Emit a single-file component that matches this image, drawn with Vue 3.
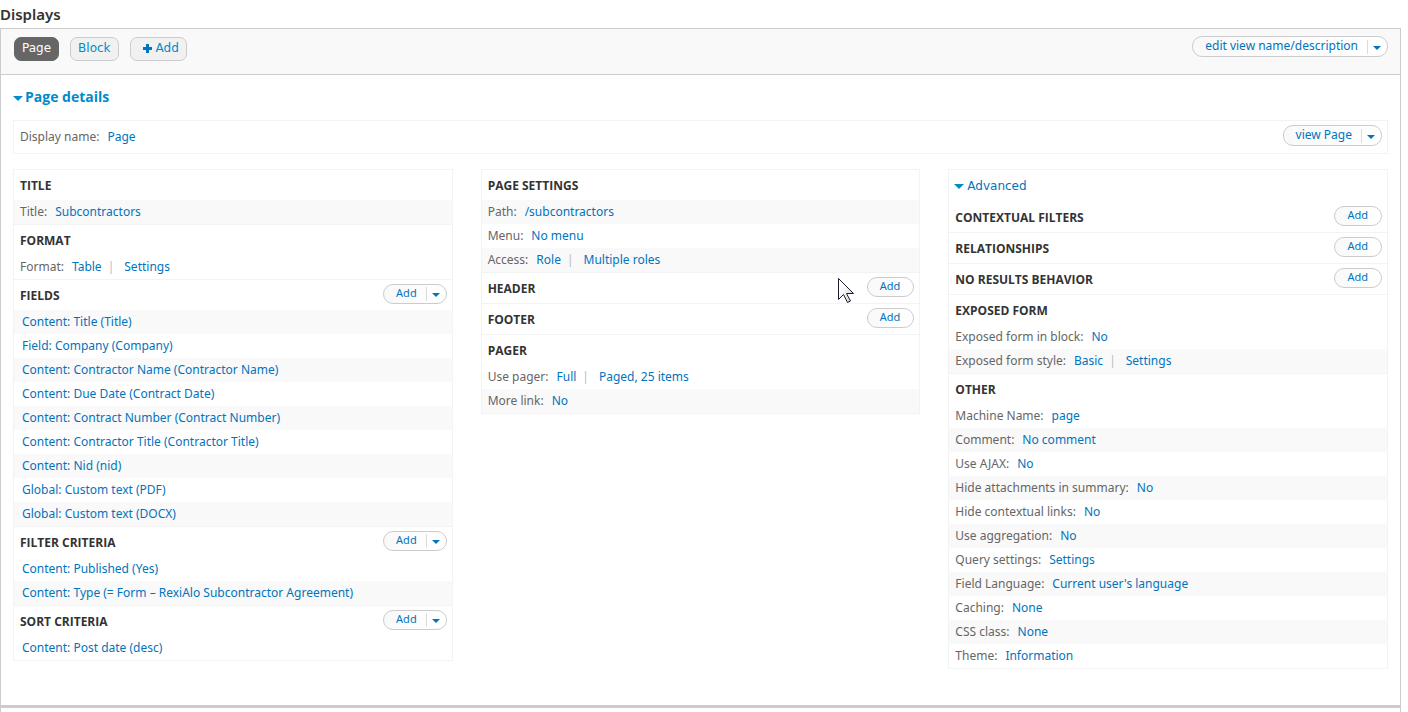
<script setup>
const columns = [
  {
    sections: [
      { title: 'Title', rows: [{ label: 'Title:', links: ['Subcontractors'], shaded: true }] },
      { title: 'Format', rows: [{ label: 'Format:', links: ['Table', 'Settings'] }] },
      {
        title: 'Fields',
        action: 'split',
        rows: [
          { links: ['Content: Title (Title)'], shaded: true },
          { links: ['Field: Company (Company)'] },
          { links: ['Content: Contractor Name (Contractor Name)'], shaded: true },
          { links: ['Content: Due Date (Contract Date)'] },
          { links: ['Content: Contract Number (Contract Number)'], shaded: true },
          { links: ['Content: Contractor Title (Contractor Title)'] },
          { links: ['Content: Nid (nid)'], shaded: true },
          { links: ['Global: Custom text (PDF)'] },
          { links: ['Global: Custom text (DOCX)'], shaded: true },
        ],
      },
      {
        title: 'Filter criteria',
        action: 'split',
        rows: [
          { links: ['Content: Published (Yes)'] },
          { links: ['Content: Type (= Form – RexiAlo Subcontractor Agreement)'], shaded: true },
        ],
      },
      { title: 'Sort criteria', action: 'split', rows: [{ links: ['Content: Post date (desc)'] }] },
    ],
  },
  {
    sections: [
      {
        title: 'Page settings',
        rows: [
          { label: 'Path:', links: ['/subcontractors'], shaded: true },
          { label: 'Menu:', links: ['No menu'] },
          { label: 'Access:', links: ['Role', 'Multiple roles'], shaded: true },
        ],
      },
      { title: 'Header', action: 'single', rows: [] },
      { title: 'Footer', action: 'single', rows: [] },
      {
        title: 'Pager',
        rows: [
          { label: 'Use pager:', links: ['Full', 'Paged, 25 items'] },
          { label: 'More link:', links: ['No'], shaded: true },
        ],
      },
    ],
  },
  {
    toggle: 'Advanced',
    sections: [
      { title: 'Contextual filters', action: 'single', rows: [] },
      { title: 'Relationships', action: 'single', rows: [] },
      { title: 'No results behavior', action: 'single', rows: [] },
      {
        title: 'Exposed form',
        rows: [
          { label: 'Exposed form in block:', links: ['No'] },
          { label: 'Exposed form style:', links: ['Basic', 'Settings'], shaded: true },
        ],
      },
      {
        title: 'Other',
        rows: [
          { label: 'Machine Name:', links: ['page'] },
          { label: 'Comment:', links: ['No comment'], shaded: true },
          { label: 'Use AJAX:', links: ['No'] },
          { label: 'Hide attachments in summary:', links: ['No'], shaded: true },
          { label: 'Hide contextual links:', links: ['No'] },
          { label: 'Use aggregation:', links: ['No'], shaded: true },
          { label: 'Query settings:', links: ['Settings'] },
          { label: 'Field Language:', links: ["Current user's language"], shaded: true },
          { label: 'Caching:', links: ['None'] },
          { label: 'CSS class:', links: ['None'], shaded: true },
          { label: 'Theme:', links: ['Information'] },
        ],
      },
    ],
  },
]
</script>

<template>
  <main class="page">
    <h1 class="page-title">Displays</h1>
    <div class="displays">
      <div class="top-bar">
        <nav class="tabs">
          <button type="button" class="tab active">Page</button>
          <button type="button" class="tab">Block</button>
          <button type="button" class="tab add">
            <svg class="plus" width="9" height="9" viewBox="0 0 9 9" aria-hidden="true">
              <path d="M3 0h3v3h3v3H6v3H3V6H0V3h3z" fill="#0074bd" />
            </svg>
            Add
          </button>
        </nav>
        <div class="drop large">
          <button type="button" class="drop-main">edit view name/description</button>
          <button type="button" class="drop-toggle" aria-label="List additional actions"><i class="arrow"></i></button>
        </div>
      </div>

      <div class="content">
        <h2 class="details-title">
          <button type="button" class="details-toggle"><i class="arrow wide"></i>Page details</button>
        </h2>

        <div class="name-box">
          <span class="label">Display name:</span>
          <a href="#">Page</a>
          <div class="drop large">
            <button type="button" class="drop-main">view Page</button>
            <button type="button" class="drop-toggle" aria-label="List additional actions"><i class="arrow"></i></button>
          </div>
        </div>

        <div class="columns">
          <div v-for="(column, c) in columns" :key="c" class="column">
            <button v-if="column.toggle" type="button" class="advanced">
              <i class="arrow wide"></i>{{ column.toggle }}
            </button>
            <section v-for="section in column.sections" :key="section.title" class="bucket">
              <header class="bucket-head">
                <h3>{{ section.title }}</h3>
                <div v-if="section.action === 'split'" class="drop">
                  <button type="button" class="drop-main">Add</button>
                  <button type="button" class="drop-toggle" aria-label="List additional actions"><i class="arrow"></i></button>
                </div>
                <div v-else-if="section.action" class="drop">
                  <button type="button" class="drop-main single">Add</button>
                </div>
              </header>
              <div
                v-for="(row, r) in section.rows"
                :key="r"
                class="row"
                :class="{ shaded: row.shaded, item: !row.label }"
              >
                <span v-if="row.label" class="label">{{ row.label }}</span>
                <template v-for="(link, l) in row.links" :key="l">
                  <span v-if="l" class="bar">|</span>
                  <a href="#">{{ link }}</a>
                </template>
              </div>
            </section>
          </div>
        </div>
      </div>
    </div>
    <div class="next-panel"></div>

    <svg class="pointer" width="17" height="26" viewBox="0 0 17 26" aria-hidden="true">
      <defs>
        <linearGradient id="pointer-fill" x1="0" y1="0" x2="1" y2="1">
          <stop offset="0.3" stop-color="#fff" />
          <stop offset="1" stop-color="#ccc" />
        </linearGradient>
      </defs>
      <path
        d="M.5.5v21l5-5 4 8 3-1.500-4-7.500h7z"
        fill="url(#pointer-fill)"
        stroke="#1c1c30"
        stroke-linejoin="round"
      />
    </svg>
  </main>
</template>

<style>
body {
  margin: 0;
  background: #fff;
}
</style>

<style scoped>
.page {
  position: relative;
  box-sizing: border-box;
  min-height: 100vh;
  display: flex;
  flex-direction: column;
  padding-right: 7px;
  font-family: "Noto Sans", "Open Sans", sans-serif;
  font-size: 12px;
  color: #666;
}

button {
  font: inherit;
  margin: 0;
  padding: 0;
  border: 0;
  background: none;
  color: #0074bd;
  cursor: pointer;
}

a {
  color: #0074bd;
  text-decoration: none;
}

.page-title {
  margin: 0;
  height: 28px;
  flex: none;
  font-size: 15px;
  font-weight: 600;
  line-height: 29px;
  color: #333;
}

.displays {
  flex: 1;
  border: 1px solid #ccc;
  border-bottom-width: 3px;
}

.top-bar {
  display: flex;
  justify-content: space-between;
  align-items: flex-start;
  padding: 7px 12px 12px 13px;
  height: 26px;
  border-bottom: 1px solid #ccc;
  background: #f9f9f9;
}

.tabs {
  display: flex;
  gap: 11px;
  padding-top: 1px;
}

.tab {
  display: flex;
  align-items: center;
  gap: 4px;
  height: 24px;
  padding: 0 7px 2px;
  border: 1px solid #ccc;
  border-radius: 7px;
  background: #f1f1f1;
  font-family: "DejaVu Sans", sans-serif;
  font-size: 12px;
  line-height: 20px;
  color: #008bcb;
}

.tab.active {
  border-color: #666;
  background: #666;
  color: #fff;
}

.tab.add {
  padding-left: 12px;
}

.arrow {
  display: block;
  flex: none;
  border: 4px solid transparent;
  border-top-color: #0074bd;
  border-bottom: 0;
}

.arrow.wide {
  border-width: 5px 5px 0;
  border-top-color: #008bcb;
}

.drop {
  display: flex;
  align-items: center;
  box-sizing: border-box;
  height: 20px;
  border: 1px solid #ccc;
  border-radius: 10px;
  background: linear-gradient(to right, #f9f9f9, #fff);
}

.drop.large {
  height: 21px;
}

.drop-main {
  height: 18px;
  padding: 0 9px 2px 12px;
  line-height: 16px;
  font-size: 11px;
}

.drop.large .drop-main {
  font-size: 12px;
}

.drop-main.single {
  padding-right: 13px;
}

.drop-toggle {
  display: flex;
  align-items: center;
  height: 14px;
  padding: 2px 6px 0 5px;
  border-left: 1px solid #ddd;
}

.content {
  padding: 0 12px 36px;
}

.details-title {
  margin: 0;
  height: 45px;
}

.details-toggle {
  display: flex;
  align-items: center;
  gap: 2px;
  height: 43px;
  font-family: "Open Sans", sans-serif;
  font-size: 14px;
  font-weight: 700;
  color: #008bcb;
}

.details-toggle .arrow {
  margin-top: 3px;
}

.name-box {
  display: flex;
  align-items: center;
  height: 31px;
  padding: 0 5px 1px 6px;
  border: 1px solid #f3f3f3;
}

.name-box .drop {
  margin: 0 0 2px auto;
}

.label {
  margin-right: 8px;
}

.columns {
  display: grid;
  grid-template-columns: repeat(3, 1fr);
  align-items: start;
  gap: 28px;
  margin-top: 15px;
}

.column {
  border: 1px solid #f3f3f3;
}

.advanced {
  display: flex;
  align-items: center;
  gap: 3px;
  height: 32px;
  padding-left: 5px;
  font-family: "DejaVu Sans", sans-serif;
  font-size: 12px;
}

.bucket + .bucket {
  border-top: 1px solid #f3f3f3;
}

.bucket-head {
  display: flex;
  justify-content: space-between;
  align-items: flex-start;
  height: 26px;
  padding: 4px 5px 0 6px;
}

.bucket-head h3 {
  margin: 0;
  font-family: "Open Sans", sans-serif;
  font-size: 12px;
  font-weight: 700;
  line-height: 24px;
  text-transform: uppercase;
  color: #333;
}

.row {
  display: flex;
  height: 24px;
  padding: 0 6px;
  line-height: 24px;
  white-space: pre;
}

.row.item {
  padding-left: 8px;
}

.row.shaded {
  background: #f9f9f9;
}

.bar {
  margin: 0 10px 0 6px;
  color: #bbb;
}

.next-panel {
  flex: none;
  height: 4px;
  border: solid #ccc;
  border-width: 0 1px;
}

.pointer {
  position: absolute;
  left: 838px;
  top: 278px;
}
</style>
